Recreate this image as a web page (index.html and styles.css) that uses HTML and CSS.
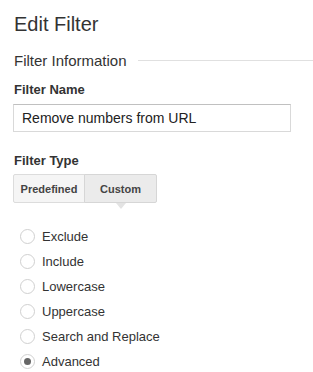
FILE: index.html
```html
<!DOCTYPE html>
<html lang="en">
<head>
  <meta charset="UTF-8" />
  <title>Edit Filter</title>
  <link rel="stylesheet" href="styles.css">
</head>
<body>
  <div class="page">
    <h1 class="title">Edit Filter</h1>
    <div class="section-head">
      <span class="section-title">Filter Information</span>
      <span class="section-rule"></span>
    </div>

    <label class="field-label" for="filterName">Filter Name</label>
    <input class="text-input" type="text" id="filterName" value="Remove numbers from URL" />

    <div class="field-label type-label">Filter Type</div>
    <div class="toggle">
      <button class="toggle-btn">Predefined</button>
      <button class="toggle-btn is-active">Custom</button>
    </div>

    <ul class="radio-list">
      <li class="radio-row"><span class="radio"></span>Exclude</li>
      <li class="radio-row"><span class="radio"></span>Include</li>
      <li class="radio-row"><span class="radio"></span>Lowercase</li>
      <li class="radio-row"><span class="radio"></span>Uppercase</li>
      <li class="radio-row"><span class="radio"></span>Search and Replace</li>
      <li class="radio-row"><span class="radio is-checked"></span>Advanced</li>
    </ul>
  </div>
</body>
</html>
```

FILE: styles.css
```css
body {
  margin: 0;
  background: #fff;
  font-family: "Liberation Sans", Arial, sans-serif;
  color: #222;
}
.page {
  padding: 12px 0 0 14px;
}
.title {
  margin: 0;
  font-size: 20px;
  font-weight: 400;
  line-height: 24px;
  color: #333;
}
.section-head {
  display: flex;
  align-items: center;
  margin-top: 14px;
  height: 20px;
}
.section-title {
  font-size: 15px;
  color: #333;
  white-space: nowrap;
}
.section-rule {
  flex: 1;
  height: 1px;
  margin-left: 11px;
  background: #e0e0e0;
}
.field-label {
  display: block;
  margin-top: 12px;
  font-size: 13px;
  font-weight: 700;
  line-height: 16px;
  color: #333;
}
.text-input {
  display: block;
  box-sizing: border-box;
  width: 278px;
  height: 28px;
  margin: 6px 0 0 -1px;
  padding: 0 8px;
  border: 1px solid #d9d9d9;
  border-top-color: #c0c0c0;
  border-radius: 0;
  font-family: inherit;
  font-size: 14px;
  color: #222;
}
.type-label {
  margin-top: 21px;
}
.toggle {
  display: flex;
  margin: 5px 0 0 -1px;
}
.toggle-btn {
  position: relative;
  width: 72px;
  height: 29px;
  padding: 0;
  border: 1px solid #dcdcdc;
  border-radius: 2px 0 0 2px;
  background: #f5f5f5;
  font-family: inherit;
  font-size: 11px;
  font-weight: 700;
  color: #444;
}
.toggle-btn + .toggle-btn {
  margin-left: -1px;
  width: 73px;
  border-radius: 0 2px 2px 0;
}
.toggle-btn.is-active {
  background: #ebebeb;
  border-color: #d6d6d6;
}
.toggle-btn.is-active::after {
  content: "";
  position: absolute;
  left: 50%;
  bottom: -7px;
  margin-left: -5px;
  border-left: 5px solid transparent;
  border-right: 5px solid transparent;
  border-top: 6px solid #e3e3e3;
}
.radio-list {
  list-style: none;
  margin: 21px 0 0 6px;
  padding: 0;
}
.radio-row {
  display: flex;
  align-items: center;
  height: 25px;
  font-size: 13px;
  color: #333;
}
.radio {
  box-sizing: border-box;
  width: 15px;
  height: 15px;
  margin-right: 7px;
  border: 1px solid #d0d0d0;
  border-radius: 50%;
  background: #fff;
  display: flex;
  align-items: center;
  justify-content: center;
}
.radio.is-checked::after {
  content: "";
  width: 7px;
  height: 7px;
  border-radius: 50%;
  background: #666;
}
```
